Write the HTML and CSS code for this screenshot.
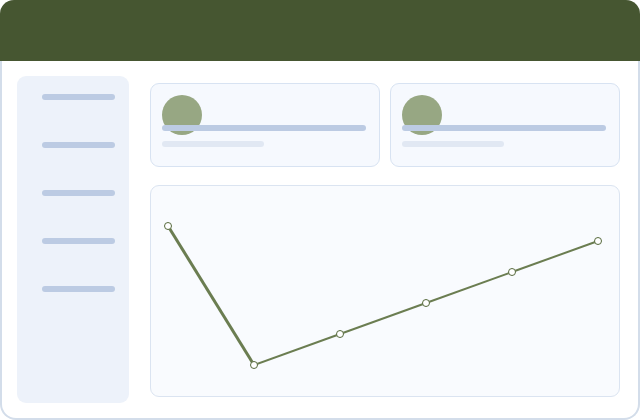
FILE: index.html
```html
<!DOCTYPE html>
<html lang="en">
<head>
  <meta charset="UTF-8">
  <meta name="viewport" content="width=device-width, initial-scale=1.0">
  <title>Dashboard</title>
  <link rel="stylesheet" href="styles.css">
</head>
<body>
  <div class="window">
    <div class="topbar"></div>
    <div class="frame">
      <aside class="sidebar">
        <div class="nav-line"></div>
        <div class="nav-line"></div>
        <div class="nav-line"></div>
        <div class="nav-line"></div>
        <div class="nav-line"></div>
      </aside>

      <main class="content">
        <div class="cards">
          <div class="card">
            <div class="avatar"></div>
            <div class="bar"></div>
            <div class="bar short"></div>
          </div>
          <div class="card">
            <div class="avatar"></div>
            <div class="bar"></div>
            <div class="bar short"></div>
          </div>
        </div>

        <div class="chart">
          <svg width="469" height="212" viewBox="0 0 469 212">
            <!-- first drop is drawn a bit heavier -->
            <polyline class="line" stroke-width="3" points="18,41 104,180"/>
            <polyline class="line" stroke-width="2" points="104,180 190,149 276,118 362,87 448,56"/>
            <circle class="dot" cx="18" cy="41" r="3.5"/>
            <circle class="dot" cx="104" cy="180" r="3.5"/>
            <circle class="dot" cx="190" cy="149" r="3.5"/>
            <circle class="dot" cx="276" cy="118" r="3.5"/>
            <circle class="dot" cx="362" cy="87" r="3.5"/>
            <circle class="dot" cx="448" cy="56" r="3.5"/>
          </svg>
        </div>
      </main>
    </div>
  </div>
</body>
</html>
```

FILE: styles.css
```css
html, body {
  margin: 0;
  padding: 0;
  background-color: #ffffff;
  font-family: "Liberation Sans", Arial, sans-serif;
}
.window {
  width: 640px;
  height: 420px;
  display: flex;
  flex-direction: column;
}
.topbar {
  height: 61px;
  background-color: #465631;
  border-radius: 14px 14px 0 0;
}
.frame {
  flex: 1;
  display: grid;
  grid-template-columns: 112px 1fr;
  column-gap: 21px;
  padding: 15px 18px 15px 15px;
  border: 2px solid #d3ddea;
  border-top: none;
  border-radius: 0 0 16px 16px;
  background-color: #ffffff;
}
.sidebar {
  background-color: #edf2fa;
  border-radius: 9px;
  padding: 18px 14px 0 25px;
  display: flex;
  flex-direction: column;
  gap: 42px;
}
.nav-line {
  height: 6px;
  border-radius: 3px;
  background-color: #bccbe3;
}
.content {
  display: flex;
  flex-direction: column;
  padding: 7px 0 6px;
}
.cards {
  display: grid;
  grid-template-columns: 1fr 1fr;
  column-gap: 10px;
}
.card {
  height: 84px;
  box-sizing: border-box;
  padding: 11px 13px 0 11px;
  background-color: #f6f9fe;
  border: 1px solid #d8e3f2;
  border-radius: 9px;
}
.avatar {
  width: 40px;
  height: 40px;
  border-radius: 50%;
  background-color: #97a783;
}
.bar {
  height: 6px;
  border-radius: 3px;
  background-color: #bccbe3;
  margin-top: -10px;
}
.bar.short {
  width: 50%;
  margin-top: 10px;
  background-color: #e1e8f3;
}
.chart {
  flex: 1;
  margin-top: 18px;
  background-color: #f9fbfe;
  border: 1px solid #dbe4f1;
  border-radius: 9px;
  overflow: hidden;
}
.chart svg {
  display: block;
  margin: -1px;
}
.line {
  fill: none;
  stroke: #6b7d51;
  stroke-linejoin: round;
}
.dot {
  fill: #ffffff;
  stroke: #56693c;
  stroke-width: 1;
}
```
